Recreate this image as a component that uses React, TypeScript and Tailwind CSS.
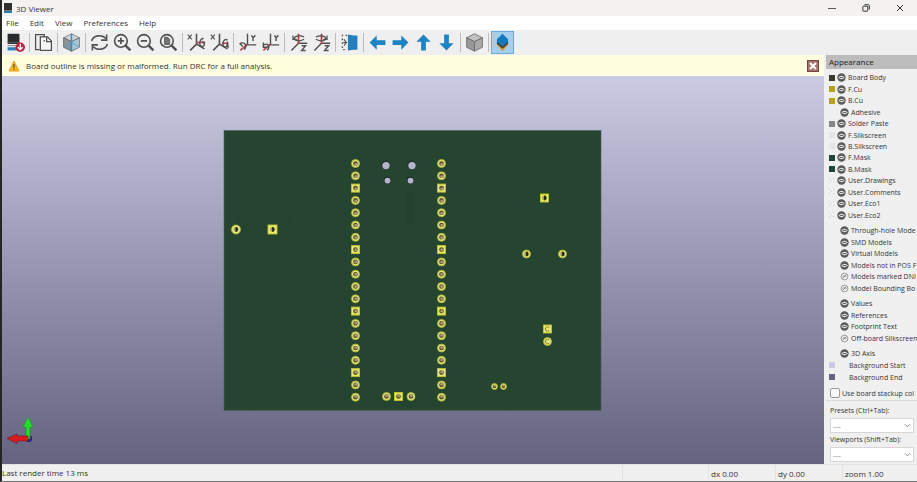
import React from "react";

type IconProps = { children: React.ReactNode };

function Icon({ children }: IconProps) {
  return (
    <svg
      viewBox="0 0 24 24"
      className="h-[19px] w-[19px]"
      fill="none"
      stroke="#505050"
      strokeWidth="2"
      aria-hidden="true"
    >
      {children}
    </svg>
  );
}

const reload = (
  <Icon>
    <rect x="2" y="1" width="15" height="13" rx="1" fill="#292b2e" stroke="none" />
    <path d="M2 12h15M2 16h12" stroke="#606468" strokeWidth="1" />
    <path d="M2 18h12v4H2z" fill="#2381bd" stroke="none" />
    <circle cx="18" cy="18" r="6" fill="#bf2440" stroke="none" />
    <path d="M18 14v7M15 18l3 3 3-3" stroke="#fff" strokeWidth="1.6" />
  </Icon>
);

const copy = (
  <Icon>
    <path d="M7 21H2V2h11v3" strokeWidth="1.6" />
    <path d="M8 5h9l5 5v12H8z" strokeWidth="1.6" fill="#f6f6f6" />
    <path d="M16 5v6h6M12 10h2" strokeWidth="1.6" />
  </Icon>
);

const raytrace = (
  <Icon>
    <path d="M12 1l10 5-10 5L2 6z" fill="#d0d4d6" stroke="#777" strokeWidth="1" />
    <path d="M2 6l10 5v12L2 18z" fill="#8d9397" stroke="#606468" strokeWidth="1" />
    <path d="M22 6l-10 5v12l10-5z" fill="#a9c6d8" stroke="#606468" strokeWidth="1" />
    <path d="M12 1v22" stroke="#318bc2" strokeWidth="1.8" />
    <path d="M3 17l9-5 9 5" stroke="#5b9cc4" strokeWidth="1.2" />
  </Icon>
);

const refresh = (
  <Icon>
    <path d="M2 10c2-7 13-9 18-3M22 14c-2 7-13 9-18 3" />
    <path d="M21 2v7h-7M3 22v-7h7" />
  </Icon>
);

const zoomIn = (
  <Icon>
    <circle cx="10" cy="10" r="8" />
    <path d="M16 16l6 6" strokeWidth="3" />
    <path d="M10 6v8M6 10h8" strokeWidth="2.2" />
  </Icon>
);

const zoomOut = (
  <Icon>
    <circle cx="10" cy="10" r="8" />
    <path d="M16 16l6 6" strokeWidth="3" />
    <path d="M6 10h8" strokeWidth="2.2" />
  </Icon>
);

const zoomFit = (
  <Icon>
    <circle cx="10" cy="10" r="8" />
    <path d="M16 16l6 6" strokeWidth="3" />
    <path d="M7 5.500h4l2.500 2.500v6.500H7z" fill="#707477" strokeWidth="1" />
  </Icon>
);

const rotateXCw = (
  <Icon>
    <path d="M1 2l5 6M6 2L1 8" strokeWidth="1.4" />
    <path d="M12 1v13L4 22M12 14l10 6" />
    <path d="M12 12h11" stroke="#bf3d50" />
    <path d="M21 7c-5-1-7 10-2 10 4 0 4-6 0-6" strokeWidth="1.7" />
  </Icon>
);

const rotateXCcw = (
  <Icon>
    <path d="M1 2l5 6M6 2L1 8" strokeWidth="1.4" />
    <path d="M12 1v13L4 22M12 14l10 6" />
    <path d="M15 13h8" stroke="#bf3d50" />
    <path d="M22 9c-5-4-8 8-3 9 3 0 3-3 3-7l1 8" strokeWidth="1.7" />
  </Icon>
);

const rotateYCw = (
  <Icon>
    <path d="M12 1v14h11M17 3l2 3 3-3M19 6v4" strokeWidth="1.8" />
    <path d="M12 14l-9 8" stroke="#bf3d50" />
    <path d="M3 13c6-2 9 3 5 8M2 13l4 4" strokeWidth="1.8" />
  </Icon>
);

const rotateYCcw = (
  <Icon>
    <path d="M12 1v14h11M17 3l2 3 3-3M19 6v4" strokeWidth="1.8" />
    <path d="M12 14l-9 8" stroke="#bf3d50" />
    <path d="M8 22c4-5 1-10-4-7M3 12v6h5" strokeWidth="1.8" />
  </Icon>
);

const rotateZCw = (
  <Icon>
    <path d="M12 13L3 22M12 13h11M16 16h5l-5 6h5" strokeWidth="1.8" />
    <path d="M12 1v13" stroke="#bf3d50" strokeWidth="2.3" />
    <path d="M19 5c-5-3-14-1-12 3 2 3 9 2 12 0M5 3v5h5" strokeWidth="1.6" />
  </Icon>
);

const rotateZCcw = (
  <Icon>
    <path d="M12 13L3 22M12 13h11M16 16h5l-5 6h5" strokeWidth="1.8" />
    <path d="M12 1v13" stroke="#bf3d50" strokeWidth="2.3" />
    <path d="M5 5c5-3 14-1 12 3-2 3-9 2-12 0M19 3v5h-5" strokeWidth="1.6" />
  </Icon>
);

const flip = (
  <Icon>
    <path d="M10 2l7 1h5v18h-5l-7 1z" fill="#2381bd" stroke="none" />
    <path d="M9 3H3v18h6" strokeDasharray="2 3" strokeWidth="1.7" />
    <path d="M4 12h5M5 8l3 4-3 4" strokeWidth="1.4" />
  </Icon>
);

function Arrow({ d }: { d: string }) {
  return (
    <Icon>
      <path d={d} fill="#1e83c4" stroke="none" />
    </Icon>
  );
}

const ortho = (
  <Icon>
    <path d="M12 1l10 5-10 5L2 6z" fill="#c2c2c2" stroke="#666" strokeWidth="1" />
    <path d="M2 6l10 5v12L2 18z" fill="#989898" stroke="#666" strokeWidth="1" />
    <path d="M22 6l-10 5v12l10-5z" fill="#aaa" stroke="#666" strokeWidth="1" />
  </Icon>
);

const layers = (
  <Icon>
    <path d="M5 15l7 8 7-8v-3H5z" fill="#dc9e36" stroke="none" />
    <path d="M5 9v5l7 6 7-6V9z" fill="#43433d" stroke="none" />
    <path d="M12 1l7 7v3l-7 6-7-6V8z" fill="#1579bd" stroke="none" />
  </Icon>
);

const toolGroups: { label: string; icon: React.ReactNode; active?: boolean }[][] = [
  [{ label: "Reload board", icon: reload }],
  [{ label: "Copy image", icon: copy }],
  [{ label: "Raytracing", icon: raytrace }],
  [
    { label: "Redraw", icon: refresh },
    { label: "Zoom in", icon: zoomIn },
    { label: "Zoom out", icon: zoomOut },
    { label: "Zoom to fit", icon: zoomFit },
  ],
  [
    { label: "Rotate X clockwise", icon: rotateXCw },
    { label: "Rotate X counterclockwise", icon: rotateXCcw },
  ],
  [
    { label: "Rotate Y clockwise", icon: rotateYCw },
    { label: "Rotate Y counterclockwise", icon: rotateYCcw },
  ],
  [
    { label: "Rotate Z clockwise", icon: rotateZCw },
    { label: "Rotate Z counterclockwise", icon: rotateZCcw },
  ],
  [{ label: "Flip board", icon: flip }],
  [
    { label: "Move left", icon: <Arrow d="M2 12l9-9v6h11v6H11v6z" /> },
    { label: "Move right", icon: <Arrow d="M22 12l-9-9v6H2v6h11v6z" /> },
    { label: "Move up", icon: <Arrow d="M12 2l9 9h-6v11H9V11H3z" /> },
    { label: "Move down", icon: <Arrow d="M12 22l9-9h-6V2H9v11H3z" /> },
  ],
  [{ label: "Orthographic projection", icon: ortho }],
  [{ label: "Appearance manager", icon: layers, active: true }],
];

function Toolbar() {
  return (
    <div role="toolbar" className="flex h-[25px] shrink-0 items-center bg-[#efefef] pl-[2px]">
      {toolGroups.map((group, i) => (
        <React.Fragment key={i}>
          {i > 0 && <div className="mx-[2px] h-[19px] w-px bg-[#bcbcbc]" />}
          {group.map((tool) => (
            <button
              key={tool.label}
              aria-label={tool.label}
              className={
                tool.active
                  ? "flex h-[23px] w-[23px] items-center justify-center border border-[#69abdc] bg-[#a5cdec]"
                  : "flex h-[23px] w-[23px] items-center justify-center"
              }
            >
              {tool.icon}
            </button>
          ))}
        </React.Fragment>
      ))}
    </div>
  );
}

type PadProps = { x: number; y: number; square?: boolean; r?: number; kind?: "pin" | "dark" | "ring" };

function Pad({ x, y, square, r = 4, kind = "pin" }: PadProps) {
  const tilt = (y - 280) / 150;
  return (
    <g>
      {square ? (
        <rect x={x - r} y={y - r} width={r * 2} height={r * 2} fill="#e6e86b" stroke="#bdc52d" strokeWidth="0.9" />
      ) : (
        <circle cx={x} cy={y} r={r} fill="#e3e680" stroke="#a9b12f" strokeWidth="0.9" />
      )}
      {kind === "pin" && (
        <>
          <circle cx={x} cy={y} r={r * 0.58} fill="#5a4a2c" />
          <circle cx={x + 0.3} cy={y - tilt} r={r * 0.38} fill="#a89c72" />
        </>
      )}
      {kind === "dark" && (
        <>
          <circle cx={x} cy={y} r="2.4" fill="#a59b65" />
          <path d={`M${x - 0.4} ${y - 2.4}a2.4 2.4 0 0 1 0 4.8z`} fill="#1e2614" />
        </>
      )}
      {kind === "ring" && (
        <path
          d={`M${x + 1.6} ${y - 1.6}a2.2 2.2 0 1 0 0 3.2`}
          fill="none"
          stroke="#82702d"
          strokeWidth="0.9"
        />
      )}
    </g>
  );
}

const headerPins = Array.from({ length: 20 }, (_, i) => ({
  y: 163.5 + i * 12.3,
  square: i % 5 === 2,
}));

function BoardScene() {
  return (
    <svg
      viewBox="2 76 822 388"
      className="h-full w-full"
      role="img"
      aria-label="Three-dimensional view of the board"
    >
      <rect x="224" y="130.5" width="377" height="280" fill="#264530" stroke="#4c5c61" strokeWidth="0.6" />
      <circle cx="264" cy="231" r="29" fill="#25432f" />
      <path d="M406 192h8v34h-8z" fill="#25422f" />
      {headerPins.map((pin) => (
        <g key={pin.y}>
          <Pad x={355.5} y={pin.y} square={pin.square} />
          <Pad x={441.5} y={pin.y} square={pin.square} />
        </g>
      ))}
      {[
        [386, 165, 4.3],
        [412, 165, 4.3],
        [387.5, 180, 3.5],
        [410.5, 180, 3.5],
      ].map(([x, y, r]) => (
        <g key={`${x}-${y}`}>
          <circle cx={x - 0.3} cy={y} r={r} fill="#1b2926" />
          <circle cx={x} cy={y + 0.6} r={r - 0.6} fill="#b4b5cb" />
        </g>
      ))}
      <Pad x={236} y={229.5} kind="dark" r={4.5} />
      <Pad x={272.5} y={229.5} square kind="dark" r={4.5} />
      <Pad x={386.5} y={396.5} />
      <Pad x={398.5} y={396.5} square />
      <Pad x={411} y={396.5} />
      <Pad x={544.5} y={198} square kind="dark" />
      <Pad x={526.5} y={254} kind="dark" />
      <Pad x={562.5} y={254} kind="dark" />
      <Pad x={547.5} y={329} square kind="ring" />
      <Pad x={547.5} y={341.5} kind="ring" />
      <Pad x={494.5} y={386.5} r={3} />
      <Pad x={503.5} y={386.5} r={3} />
      <circle cx="28.5" cy="438.5" r="3.5" fill="#15218d" />
      <path d="M26 439v-12h-3l5-10 5 10h-3v12z" fill="#22df2e" stroke="#23922d" strokeWidth="0.7" />
      <path d="M28 436v5H17v2.5l-10-5 10-4.5v2z" fill="#d91b20" stroke="#751d28" strokeWidth="0.7" />
    </svg>
  );
}

type Visibility = "on" | "off";
type LayerItem = { name: string; swatch?: string; eye?: Visibility; dotted?: boolean; indent?: boolean };

const layerItems: LayerItem[] = [
  { name: "Board Body", swatch: "#3b3a2b", eye: "on" },
  { name: "F.Cu", swatch: "#b5a21e", eye: "on" },
  { name: "B.Cu", swatch: "#b5a21e", eye: "on" },
  { name: "Adhesive", eye: "on", indent: true },
  { name: "Solder Paste", swatch: "#868686", eye: "on" },
  { name: "F.Silkscreen", swatch: "#e5e5e5", eye: "on" },
  { name: "B.Silkscreen", swatch: "#e5e5e5", eye: "on" },
  { name: "F.Mask", swatch: "#24463a", eye: "on" },
  { name: "B.Mask", swatch: "#24463a", eye: "on" },
  { name: "User.Drawings", dotted: true, eye: "on" },
  { name: "User.Comments", dotted: true, eye: "on" },
  { name: "User.Eco1", dotted: true, eye: "on" },
  { name: "User.Eco2", dotted: true, eye: "on" },
];

const modelItems: LayerItem[] = [
  { name: "Through-hole Mode", eye: "on", indent: true },
  { name: "SMD Models", eye: "on", indent: true },
  { name: "Virtual Models", eye: "on", indent: true },
  { name: "Models not in POS F", eye: "on", indent: true },
  { name: "Models marked DNI", eye: "off", indent: true },
  { name: "Model Bounding Bo", eye: "off", indent: true },
];

const textItems: LayerItem[] = [
  { name: "Values", eye: "on", indent: true },
  { name: "References", eye: "on", indent: true },
  { name: "Footprint Text", eye: "on", indent: true },
  { name: "Off-board Silkscreen", eye: "off", indent: true },
];

const sceneItems: LayerItem[] = [
  { name: "3D Axis", eye: "on", indent: true },
  { name: "Background Start", swatch: "#cbcbe3" },
  { name: "Background End", swatch: "#65657f" },
];

function Eye({ state }: { state: Visibility }) {
  return state === "on" ? (
    <svg viewBox="0 0 9 9" className="h-[9px] w-[9px]" aria-hidden="true">
      <circle cx="4.5" cy="4.5" r="4.2" fill="#5a5a5a" />
      <path d="M1.2 4.5q3.3-3.4 6.6 0q-3.3 3.4-6.6 0z" fill="#f0f0f0" />
      <path d="M2.6 4.5h3.8" stroke="#666" strokeWidth="1.2" />
    </svg>
  ) : (
    <svg viewBox="0 0 9 9" className="h-[9px] w-[9px]" fill="none" stroke="#858585" aria-hidden="true">
      <circle cx="4.5" cy="4.5" r="3.4" strokeWidth="0.8" />
      <path d="M2.5 4.5q2-2 4 0M2.500 6.500l4-4" strokeWidth="0.9" />
    </svg>
  );
}

function LayerRow({ item }: { item: LayerItem }) {
  return (
    <li className="flex min-h-0 items-center whitespace-nowrap">
      <span className="flex w-[8px] shrink-0">
        {item.swatch && (
          <svg viewBox="0 0 6 6" className="h-[6px] w-[6px]" aria-hidden="true">
            <rect width="6" height="6" fill={item.swatch} />
          </svg>
        )}
        {item.dotted && (
          <svg viewBox="0 0 6 6" className="h-[6px] w-[6px]" fill="#cfcfcf" aria-hidden="true">
            <path d="M0 0h1v1H0zM4 0h1v1H4zM2 2h1v1H2zM4 4h1v1H4zM0 4h1v1H0z" />
          </svg>
        )}
      </span>
      {item.indent && <span className="w-[3px] shrink-0" />}
      {item.eye ? (
        <button aria-label={`Toggle ${item.name}`} className="shrink-0">
          <Eye state={item.eye} />
        </button>
      ) : (
        <span className="w-[10px] shrink-0" />
      )}
      <span className="pl-[2px]">{item.name}</span>
    </li>
  );
}

function Preset({ id, label }: { id: string; label: string }) {
  return (
    <div className="flex flex-col">
      <label htmlFor={id} className="h-[14px] whitespace-nowrap leading-[14px]">
        {label}
      </label>
      <div className="relative">
        <select
          id={id}
          className="block h-[15px] w-full appearance-none border border-[#d6d6d6] bg-white px-[2px] text-[8px] leading-[13px] text-[#777]"
        >
          <option>---</option>
        </select>
        <svg
          viewBox="0 0 8 5"
          className="pointer-events-none absolute top-[5px] right-[3px] h-[5px] w-[7px]"
          fill="none"
          stroke="#777"
          aria-hidden="true"
        >
          <path d="M1 1l3 3 3-3" />
        </svg>
      </div>
    </div>
  );
}

function AppearancePanel() {
  return (
    <aside className="flex w-[91px] shrink-0 flex-col overflow-hidden bg-[#f0f0f0] text-[7px] leading-[11px] text-[#333]">
      <h2 className="h-[14px] shrink-0 bg-[#bcbcbc] pl-[3px] text-[8px] leading-[14px] text-[#222]">
        Appearance
      </h2>
      <div className="flex flex-col pt-[3px] pl-[3px]">
        <ul className="grid h-[149px] auto-rows-fr">
          {layerItems.map((item) => (
            <LayerRow key={item.name} item={item} />
          ))}
        </ul>
        <ul className="mt-[4px] grid h-[69px] auto-rows-fr">
          {modelItems.map((item) => (
            <LayerRow key={item.name} item={item} />
          ))}
        </ul>
        <ul className="mt-[4px] grid h-[46px] auto-rows-fr">
          {textItems.map((item) => (
            <LayerRow key={item.name} item={item} />
          ))}
        </ul>
        <ul className="mt-[4px] grid h-[35px] auto-rows-fr">
          {sceneItems.map((item) => (
            <LayerRow key={item.name} item={item} />
          ))}
        </ul>
      </div>
      <div className="mt-[3px] flex h-[14px] items-center gap-[2px] overflow-hidden pr-[3px] pl-[4px]">
        <input
          id="stackup"
          type="checkbox"
          className="h-[10px] w-[10px] shrink-0 appearance-none rounded-[2px] border border-[#999] bg-[#fafafa]"
        />
        <label htmlFor="stackup" className="overflow-hidden whitespace-nowrap">
          Use board stackup col
        </label>
      </div>
      <div className="flex flex-col border-t border-[#d9d9d9] pt-[3px] pr-[3px] pl-[4px]">
        <Preset id="presets" label="Presets (Ctrl+Tab):" />
        <Preset id="viewports" label="Viewports (Shift+Tab):" />
      </div>
    </aside>
  );
}

function TitleBar() {
  return (
    <header className="flex h-[16px] shrink-0 items-center bg-[#f3f2f1] pl-[2px]">
      <svg viewBox="0 0 8 10" className="h-[10px] w-[8px]" aria-hidden="true">
        <path d="M0 0h8v7H0z" fill="#2d3033" />
        <path d="M0 7h8v1H0z" fill="#777" />
        <path d="M0 8h8v2H0z" fill="#2a7db3" />
      </svg>
      <h1 className="pl-[4px] text-[8px] leading-[15px]">3D Viewer</h1>
      <div className="ml-auto flex items-center gap-[14px] pr-[7px]">
        <button aria-label="Minimize" className="flex h-[15px] w-[20px] items-center justify-center">
          <svg viewBox="0 0 8 8" className="h-[8px] w-[8px]" stroke="#333" aria-hidden="true">
            <path d="M0 4.500h8" strokeWidth="0.8" />
          </svg>
        </button>
        <button aria-label="Restore" className="flex h-[15px] w-[20px] items-center justify-center">
          <svg viewBox="0 0 8 8" className="h-[8px] w-[8px]" fill="none" stroke="#333" aria-hidden="true">
            <rect x="0.8" y="2.2" width="5" height="5" rx="0.8" />
            <path d="M2.500 0.700h3.800q1 0 1 1v3.800" />
          </svg>
        </button>
        <button aria-label="Close" className="flex h-[15px] w-[20px] items-center justify-center">
          <svg viewBox="0 0 8 8" className="h-[8px] w-[8px]" stroke="#333" aria-hidden="true">
            <path d="M1 1l6 6M7 1L1 7" />
          </svg>
        </button>
      </div>
    </header>
  );
}

export default function App() {
  return (
    <div className="flex h-screen flex-col overflow-hidden border-b border-l-2 border-b-[#777] border-l-[#252525] bg-[#f0f0f0] font-['Open_Sans','Noto_Sans',sans-serif] text-[8px] text-[#333]">
      <TitleBar />
      <nav className="flex h-[14px] shrink-0 items-center gap-[11px] bg-white pl-[4px] leading-[14px]">
        {["File", "Edit", "View", "Preferences", "Help"].map((name) => (
          <button key={name}>{name}</button>
        ))}
      </nav>
      <Toolbar />
      <div className="flex min-h-0 flex-1">
        <main className="mr-[2px] flex min-w-0 flex-1 flex-col">
          <div className="flex h-[21px] shrink-0 items-center bg-[#ffffdf] pr-[5px] pl-[6px]">
            <svg viewBox="0 0 12 12" className="h-[12px] w-[12px]" aria-hidden="true">
              <path d="M6 1l5 10H1z" fill="#f7b91c" stroke="#e8a51b" strokeLinejoin="round" />
              <path d="M6 4v4M6 9v1" stroke="#554a27" strokeWidth="1.2" />
            </svg>
            <p className="pl-[6px] whitespace-nowrap">
              Board outline is missing or malformed. Run DRC for a full analysis.
            </p>
            <button aria-label="Dismiss warning" className="ml-auto">
              <svg viewBox="0 0 12 12" className="h-[12px] w-[12px]" aria-hidden="true">
                <rect x="0.5" y="0.5" width="11" height="11" fill="#a8736d" stroke="#724640" />
                <path d="M3 3l6 6M9 3L3 9" stroke="#fff" strokeWidth="2" />
              </svg>
            </button>
          </div>
          <div className="min-h-0 flex-1 bg-linear-to-b from-[#cbcbe4] to-[#646480]">
            <BoardScene />
          </div>
        </main>
        <AppearancePanel />
      </div>
      <footer className="flex h-[17px] shrink-0 items-center border-t border-[#e2e2e2] bg-[#f0f0f0] leading-[18px]">
        <span className="flex-1">Last render time 13 ms</span>
        <span className="h-full w-[86px] border-l border-[#e1e1e1]" />
        <span className="h-full w-[67px] border-l border-[#e1e1e1] pl-[2px]">dx 0.00</span>
        <span className="h-full w-[67px] border-l border-[#e1e1e1] pl-[2px]">dy 0.00</span>
        <span className="h-full w-[75px] border-l border-[#e1e1e1] pl-[2px]">zoom 1.00</span>
      </footer>
    </div>
  );
}
